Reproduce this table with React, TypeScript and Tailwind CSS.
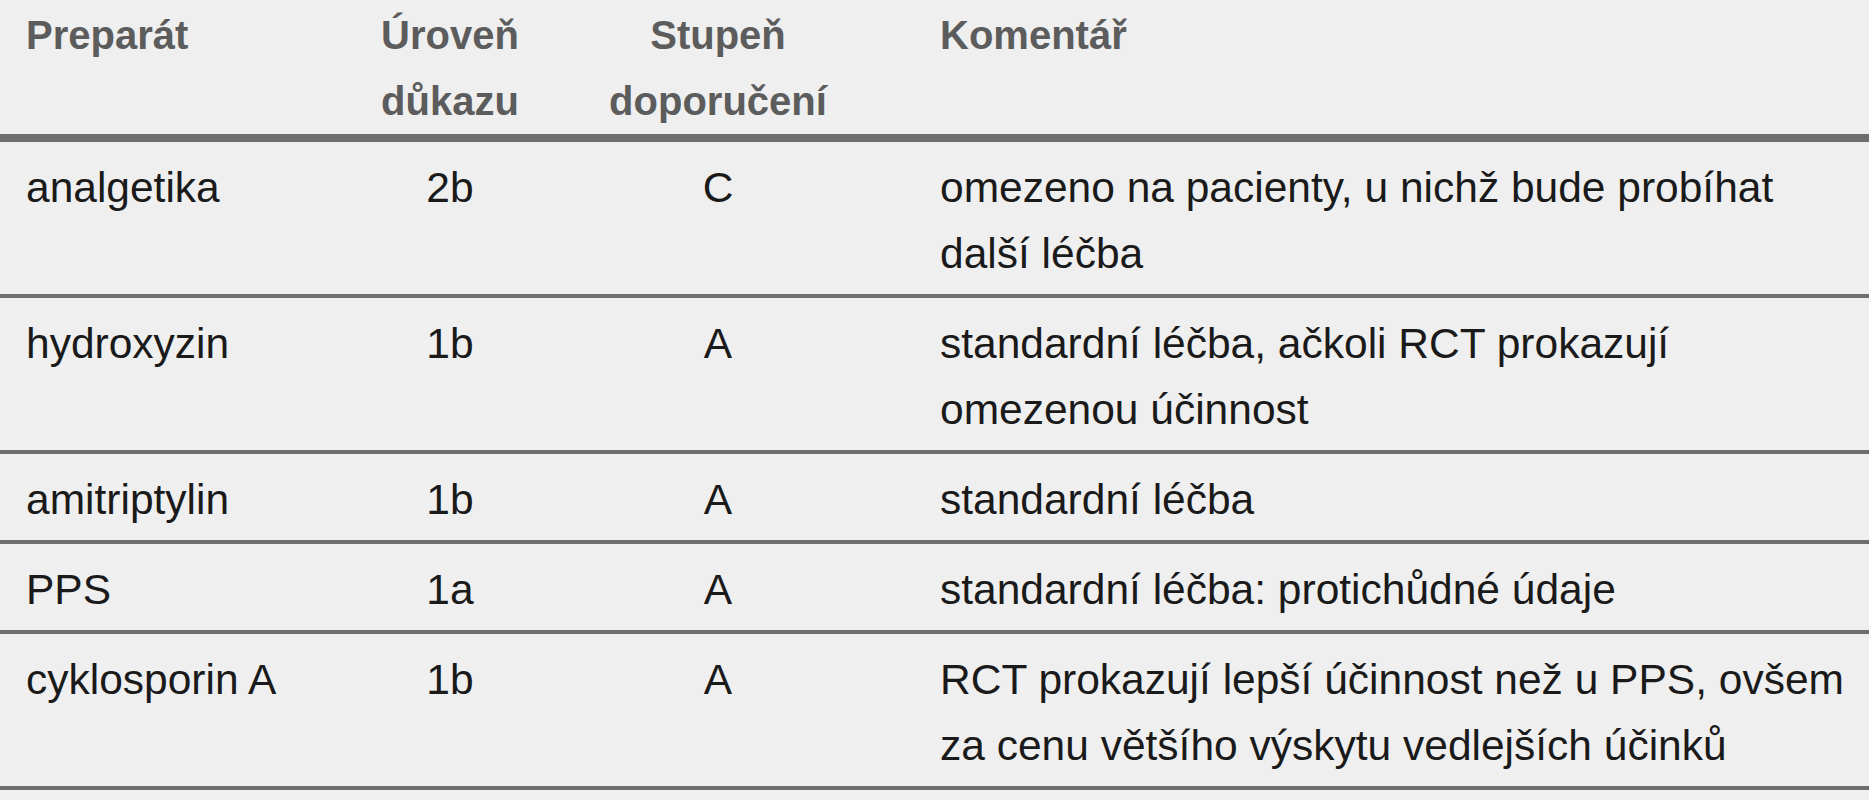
const rows = [
  {
    name: "analgetika",
    level: "2b",
    grade: "C",
    comment: ["omezeno na pacienty, u nichž bude probíhat", "další léčba"],
  },
  {
    name: "hydroxyzin",
    level: "1b",
    grade: "A",
    comment: ["standardní léčba, ačkoli RCT prokazují", "omezenou účinnost"],
  },
  { name: "amitriptylin", level: "1b", grade: "A", comment: ["standardní léčba"] },
  { name: "PPS", level: "1a", grade: "A", comment: ["standardní léčba: protichůdné údaje"] },
  {
    name: "cyklosporin A",
    level: "1b",
    grade: "A",
    comment: ["RCT prokazují lepší účinnost než u PPS, ovšem", "za cenu většího výskytu vedlejších účinků"],
  },
];

export default function App() {
  return (
    <div className="min-h-screen w-full bg-[#efefef] font-['Liberation_Sans',Arial,sans-serif]">
      {/* header */}
      <div className="grid grid-cols-[330px_240px_296px_1fr] border-b-8 border-[#6e6e6e] pt-[2px] text-[40px] leading-[66px] text-[#5c5c5c] font-bold">
        <div className="pl-[26px]">Preparát</div>
        <div className="text-center">
          Úroveň
          <br />
          důkazu
        </div>
        <div className="text-center">
          Stupeň
          <br />
          doporučení
        </div>
        <div className="pl-[74px]">Komentář</div>
      </div>

      {rows.map((r) => (
        <div
          key={r.name}
          className="grid grid-cols-[330px_240px_296px_1fr] border-b-4 border-[#6e6e6e] pt-[13px] pb-[7px] text-[42.5px] leading-[66px] text-[#1a1a1a]"
        >
          <div className="pl-[26px]">{r.name}</div>
          <div className="text-center">{r.level}</div>
          <div className="text-center">{r.grade}</div>
          <div className="pl-[74px]">
            {r.comment.map((c) => (
              <div key={c}>{c}</div>
            ))}
          </div>
        </div>
      ))}
    </div>
  );
}
